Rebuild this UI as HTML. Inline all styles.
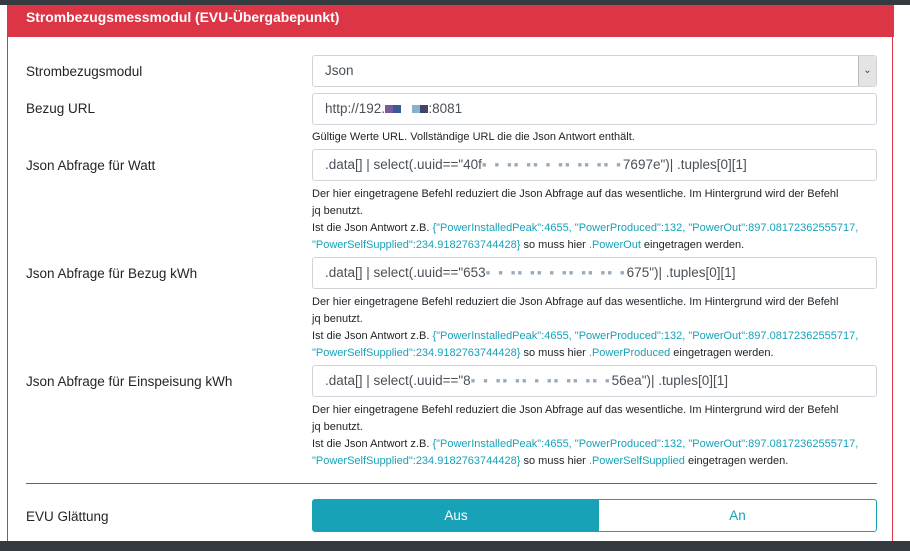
<!DOCTYPE html><html><head><meta charset="utf-8"><style>
html,body{margin:0;width:910px;height:551px;overflow:hidden}
body{background:#fff;font-family:"Liberation Sans",sans-serif;color:#212529;position:relative}
.top{position:absolute;left:0;top:0;width:910px;height:5px;background:#343a40}
.card{position:absolute;left:7px;top:6px;width:886px;height:545px;border:1px solid #dc3545;border-top:0;border-bottom:0;box-sizing:border-box}
.hd{position:absolute;left:7px;top:5px;width:887px;height:32px;background:#dc3545;color:#fff;font-weight:bold;font-size:13.9px;line-height:24px;padding-left:19px;box-sizing:border-box}
.lbl{position:absolute;left:26px;font-size:13.5px}
.inp{position:absolute;left:312px;width:565px;height:32px;border:1px solid #ced4da;border-radius:3px;box-sizing:border-box;font-size:13.5px;line-height:30px;padding-left:12px;color:#495057;white-space:nowrap}
.help{position:absolute;left:312px;width:575px;font-size:11px;line-height:17px;color:#212529;white-space:nowrap}
.c{color:#17a2b8}
.px{display:inline-block;width:8px;height:8px;vertical-align:middle}
.bot{position:absolute;left:0;top:541px;width:910px;height:10px;background:#343a40}
</style></head><body>
<div class="top"></div>
<div class="card"></div>
<div class="hd">Strombezugsmessmodul (EVU-Übergabepunkt)</div>
<div class="lbl" style="top:64px">Strombezugsmodul</div>
<div class="inp" style="top:55px">Json<div style="position:absolute;right:0;top:0;width:17px;height:30px;background:#e4e4e4;border-left:1px solid #bbb;font-size:10px;text-align:center;line-height:30px;color:#444">&#8964;</div></div>
<div class="lbl" style="top:101px">Bezug URL</div>
<div class="inp" style="top:93px">http://192.<span class="px" style="background:#7a5a9a"></span><span class="px" style="background:#3a5a9a"></span>&nbsp;&nbsp;&nbsp;<span class="px" style="background:#8ab0d0"></span><span class="px" style="background:#446"></span>:8081</div>
<div class="help" style="top:129px">Gültige Werte URL. Vollständige URL die die Json Antwort enthält.</div>
<div class="lbl" style="top:158px">Json Abfrage für Watt</div>
<div class="inp" style="top:149px">.data[] | select(.uuid=="40f<span style="color:#9ab;letter-spacing:2px">▪ ▪ ▪▪ ▪▪ ▪ ▪▪ ▪▪ ▪▪ ▪</span>7697e")| .tuples[0][1]</div>
<div class="help" style="top:186px">Der hier eingetragene Befehl reduziert die Json Abfrage auf das wesentliche. Im Hintergrund wird der Befehl<br>jq benutzt.<br>Ist die Json Antwort z.B. <span class="c">{"PowerInstalledPeak":4655, "PowerProduced":132, "PowerOut":897.08172362555717,</span><br><span class="c">"PowerSelfSupplied":234.9182763744428}</span> so muss hier <span class="c">.PowerOut</span> eingetragen werden.</div>
<div class="lbl" style="top:266px">Json Abfrage für Bezug kWh</div>
<div class="inp" style="top:257px">.data[] | select(.uuid=="653<span style="color:#9ab;letter-spacing:2px">▪ ▪ ▪▪ ▪▪ ▪ ▪▪ ▪▪ ▪▪ ▪</span>675")| .tuples[0][1]</div>
<div class="help" style="top:294px">Der hier eingetragene Befehl reduziert die Json Abfrage auf das wesentliche. Im Hintergrund wird der Befehl<br>jq benutzt.<br>Ist die Json Antwort z.B. <span class="c">{"PowerInstalledPeak":4655, "PowerProduced":132, "PowerOut":897.08172362555717,</span><br><span class="c">"PowerSelfSupplied":234.9182763744428}</span> so muss hier <span class="c">.PowerProduced</span> eingetragen werden.</div>
<div class="lbl" style="top:374px">Json Abfrage für Einspeisung kWh</div>
<div class="inp" style="top:365px">.data[] | select(.uuid=="8<span style="color:#9ab;letter-spacing:2px">▪ ▪ ▪▪ ▪▪ ▪ ▪▪ ▪▪ ▪▪ ▪</span>56ea")| .tuples[0][1]</div>
<div class="help" style="top:402px">Der hier eingetragene Befehl reduziert die Json Abfrage auf das wesentliche. Im Hintergrund wird der Befehl<br>jq benutzt.<br>Ist die Json Antwort z.B. <span class="c">{"PowerInstalledPeak":4655, "PowerProduced":132, "PowerOut":897.08172362555717,</span><br><span class="c">"PowerSelfSupplied":234.9182763744428}</span> so muss hier <span class="c">.PowerSelfSupplied</span> eingetragen werden.</div>
<div style="position:absolute;left:26px;top:483px;width:851px;height:1px;background:#c23b4a"></div>
<div class="lbl" style="top:509px">EVU Glättung</div>
<div style="position:absolute;left:312px;top:499px;width:565px;height:33px;border:1px solid #17a2b8;border-radius:3px;box-sizing:border-box;display:flex;font-size:13.5px;line-height:31px;text-align:center">
<div style="width:286px;background:#17a2b8;color:#fff">Aus</div><div style="flex:1;color:#17a2b8">An</div></div>
<div class="bot"></div>
</body></html>
